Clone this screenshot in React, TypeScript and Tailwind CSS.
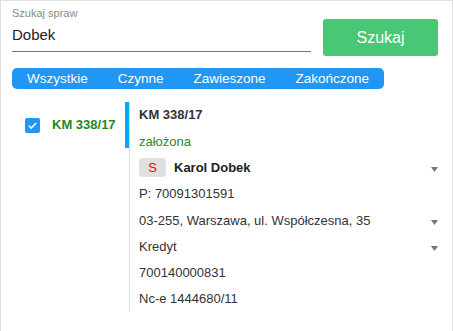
import React from "react";

const tabs = ["Wszystkie", "Czynne", "Zawieszone", "Zakończone"];

function Caret() {
  return (
    <svg width="7" height="5" viewBox="0 0 7 5" className="shrink-0 mt-[4px]">
      <polygon points="0,0 7,0 3.5,5" fill="#777" />
    </svg>
  );
}

function Row({ children, caret }: { children: React.ReactNode; caret?: boolean }) {
  return (
    <div className="h-[26.3px] flex items-center justify-between">
      <div className="flex items-center">{children}</div>
      {caret && <Caret />}
    </div>
  );
}

export default function App() {
  return (
    <main className="min-h-screen bg-white font-['Liberation_Sans',Arial,sans-serif] text-[#333]">
      <div className="h-[340px] border border-[#e0e0e0] pl-[11px] pr-[14px] pt-[6px]">
        <section className="flex items-start">
          <div className="flex-1">
            <p className="text-[11px] leading-[13px] text-[#888]">Szukaj spraw</p>
            <div className="h-[32px] flex items-center border-b border-[#777] text-[15px] text-[#222]">
              Dobek
            </div>
          </div>
          <button className="ml-3 mt-3 w-[115px] h-[37px] rounded-[3px] bg-[#48c774] text-white text-[16px]">
            Szukaj
          </button>
        </section>

        <nav className="mt-3 flex w-fit rounded-[5px] bg-[#2196f3]">
          {tabs.map((t) => (
            <span key={t} className="px-[15px] text-[13.5px] leading-[21px] text-white">
              {t}
            </span>
          ))}
        </nav>

        <section className="mt-[13px] flex items-start">
          <div className="w-[113px] h-[46px] flex items-center">
            <span className="ml-[13px] w-[15px] h-[15px] rounded-[2px] bg-[#2196f3] flex items-center justify-center">
              <svg width="11" height="11" viewBox="0 0 24 24">
                <path d="M4 12.5l5 5L20 6.5" fill="none" stroke="#fff" strokeWidth="3.5" />
              </svg>
            </span>
            <span className="ml-3 text-[13px] font-bold text-[#1f8a1f]">KM 338/17</span>
          </div>
          <div className="w-1 h-[46px] bg-[#03a9f4]" />
          <div className="flex-1 border-l border-[#dddddd] pl-[9px] text-[13px]">
            <Row>
              <span className="font-bold">KM 338/17</span>
            </Row>
            <Row>
              <span className="text-[#2a8a2a]">założona</span>
            </Row>
            <Row caret>
              <span className="w-[27px] h-[19px] rounded-[4px] bg-[#e0e0e0] text-[#f00] flex items-center justify-center">
                S
              </span>
              <span className="ml-2 font-bold text-[#222]">Karol Dobek</span>
            </Row>
            <Row>P: 70091301591</Row>
            <Row caret>03-255, Warszawa, ul. Współczesna, 35</Row>
            <Row caret>Kredyt</Row>
            <Row>700140000831</Row>
            <Row>Nc-e 1444680/11</Row>
          </div>
        </section>
      </div>
    </main>
  );
}
